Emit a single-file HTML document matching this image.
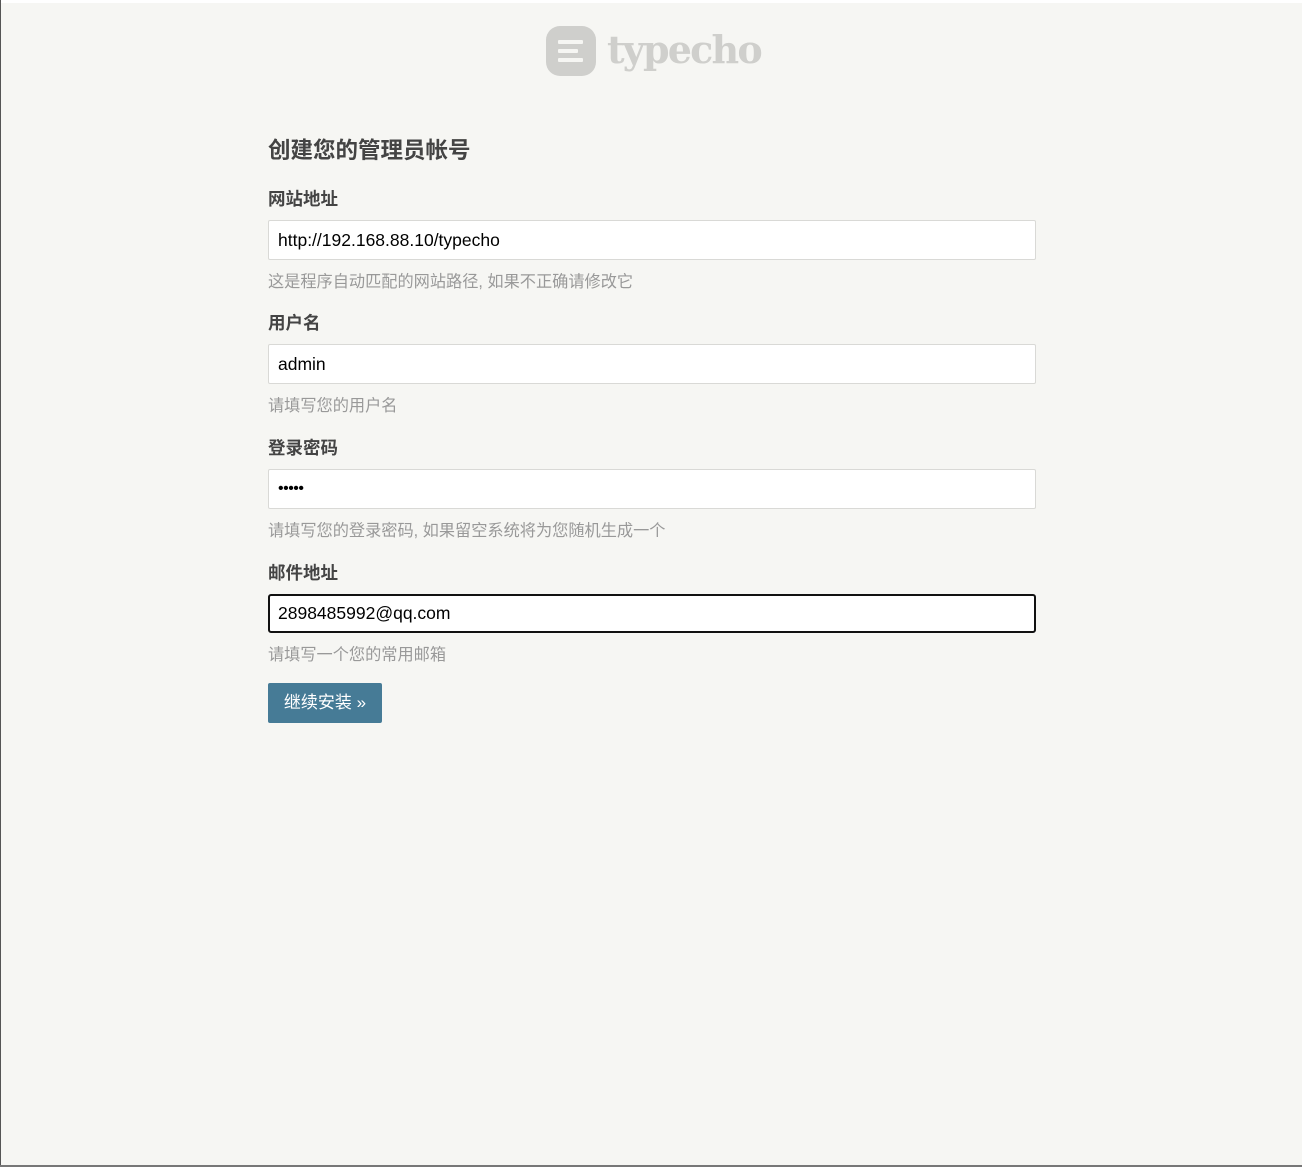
<!DOCTYPE html>
<html><head><meta charset="utf-8"><style>
html,body{margin:0;padding:0;}
body{width:1302px;height:1167px;background:#f6f6f3;position:relative;overflow:hidden;font-family:"Liberation Sans","Noto Sans CJK SC",sans-serif;}
.edge{position:absolute;left:0;top:0;width:1px;height:1167px;background:#555;}
.topw{position:absolute;left:0;top:0;width:1302px;height:3px;background:#fff;}
.bot{position:absolute;left:0;top:1165px;width:1302px;height:2px;background:#777;}
.a{position:absolute;}
h2{position:absolute;left:268px;top:137px;margin:0;font-size:22.5px;font-weight:bold;color:#444;line-height:28px;}
.lab{position:absolute;left:268px;font-size:17.5px;font-weight:bold;color:#444;line-height:22px;}
.inp{position:absolute;left:268px;height:38px;border:1px solid #d9d9d6;background:#fff;border-radius:2px;font-size:17.5px;color:#000;line-height:38px;padding-left:9px;width:757px;}
.help{position:absolute;left:268px;font-size:16.2px;color:#999;line-height:20px;}
.btn{position:absolute;left:268px;top:683px;width:114px;height:40px;background:#467b96;border-radius:2px;color:#fff;font-size:17px;line-height:40px;text-align:center;}
</style></head><body>
<div class="topw"></div><div class="edge"></div><div class="bot"></div>
<svg class="a" style="left:546px;top:26px" width="50" height="50" viewBox="0 0 50 50">
<rect x="0" y="0" width="50" height="50" rx="14" fill="#cfcfcc"/>
<rect x="12" y="14" width="25" height="4" rx="1" fill="#f6f6f3"/>
<rect x="12" y="23" width="20" height="4" rx="1" fill="#f6f6f3"/>
<rect x="12" y="32" width="25" height="4" rx="1" fill="#f6f6f3"/>
</svg>
<div class="a" style="left:607px;top:25px;font-family:'DejaVu Serif','Liberation Serif',serif;font-size:38px;font-weight:bold;color:#cfcfcc;line-height:50px;letter-spacing:-1.8px">typecho</div>
<h2>创建您的管理员帐号</h2>
<div class="lab" style="top:188px">网站地址</div>
<div class="inp" style="top:220px">http://192.168.88.10/typecho</div>
<div class="help" style="top:272px">这是程序自动匹配的网站路径, 如果不正确请修改它</div>
<div class="lab" style="top:312px">用户名</div>
<div class="inp" style="top:344px">admin</div>
<div class="help" style="top:396px">请填写您的用户名</div>
<div class="lab" style="top:437px">登录密码</div>
<div class="inp" style="top:469px;font-size:16px;letter-spacing:-0.5px">•••••</div>
<div class="help" style="top:521px">请填写您的登录密码, 如果留空系统将为您随机生成一个</div>
<div class="lab" style="top:562px">邮件地址</div>
<div class="inp" style="top:594px;border:2px solid #111;height:35px;line-height:35px;border-radius:3px;width:756px;padding-left:8px">2898485992@qq.com</div>
<div class="help" style="top:645px">请填写一个您的常用邮箱</div>
<div class="btn">继续安装 »</div>
</body></html>
